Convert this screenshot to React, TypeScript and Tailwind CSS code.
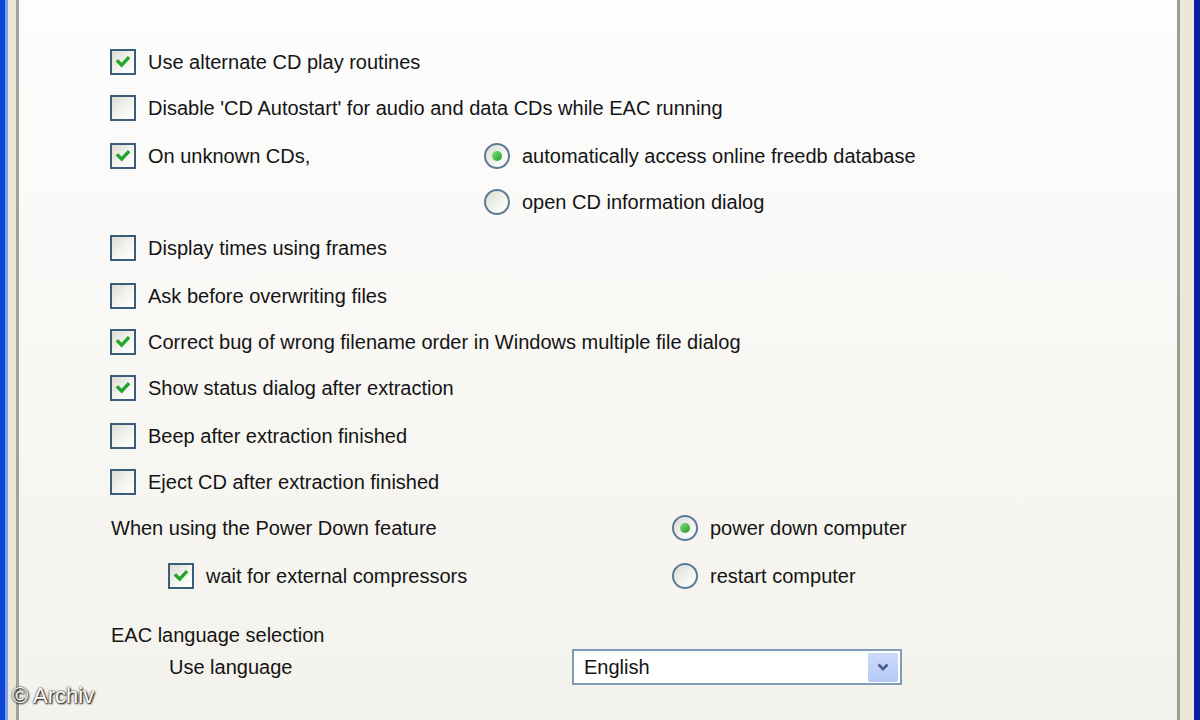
import React from 'react'

const font = { fontFamily: '"Liberation Sans", Arial, sans-serif' }

function CheckBox({ checked }: { checked?: boolean }) {
  return (
    <span className="flex h-[26px] w-[26px] flex-shrink-0 items-center justify-center border-2 border-[#3b5d7c] bg-gradient-to-br from-[#dcdcd4] via-[#f2f2ee] to-white">
      {checked && (
        <svg viewBox="0 0 20 20" className="h-[18px] w-[18px]">
          <path d="M4.5 9.5 L8.5 13.5 L15.5 6" fill="none" stroke="#22a52b" strokeWidth="3.8" strokeLinecap="square" />
        </svg>
      )}
    </span>
  )
}

function Radio({ checked }: { checked?: boolean }) {
  return (
    <span className="flex h-[26px] w-[26px] flex-shrink-0 items-center justify-center rounded-full border-2 border-[#5d7a96] bg-gradient-to-br from-[#dcdcd4] via-[#f1f1ec] to-white">
      {checked && <span className="h-[10px] w-[10px] rounded-full bg-gradient-to-br from-[#7be37b] to-[#1f9a25]" />}
    </span>
  )
}

function Check({ checked, label }: { checked?: boolean; label: string }) {
  return (
    <div className="flex items-center gap-[12px]">
      <CheckBox checked={checked} />
      <span>{label}</span>
    </div>
  )
}

function Opt({ checked, label }: { checked?: boolean; label: string }) {
  return (
    <div className="flex items-center gap-[12px]">
      <Radio checked={checked} />
      <span>{label}</span>
    </div>
  )
}

export default function App() {
  return (
    <div className="relative flex h-[720px] w-[1200px] overflow-hidden text-[20px] text-[#141414]" style={font}>
      {/* left window frame */}
      <div className="flex flex-shrink-0">
        <div className="w-[5px] bg-[#0a45d8]" />
        <div className="w-[3px] bg-[#7ea0ee]" />
        <div className="w-[8px] bg-[#ebe8d8]" />
        <div className="w-[3px] bg-[#a3a39c]" />
      </div>

      <div className="flex-1 bg-gradient-to-b from-[#fdfdfd] to-[#f4f2ec] pl-[91px] pt-[39px]">
        <div className="flex h-[46px] items-center">
          <Check checked label="Use alternate CD play routines" />
        </div>
        <div className="flex h-[46px] items-center">
          <Check label="Disable 'CD Autostart' for audio and data CDs while EAC running" />
        </div>
        <div className="mt-[2px] flex h-[46px] items-center">
          <div className="w-[374px]">
            <Check checked label="On unknown CDs," />
          </div>
          <Opt checked label="automatically access online freedb database" />
        </div>
        <div className="flex h-[46px] items-center pl-[374px]">
          <Opt label="open CD information dialog" />
        </div>
        <div className="flex h-[46px] items-center">
          <Check label="Display times using frames" />
        </div>
        <div className="mt-[2px] flex h-[46px] items-center">
          <Check label="Ask before overwriting files" />
        </div>
        <div className="flex h-[46px] items-center">
          <Check checked label="Correct bug of wrong filename order in Windows multiple file dialog" />
        </div>
        <div className="flex h-[46px] items-center">
          <Check checked label="Show status dialog after extraction" />
        </div>
        <div className="mt-[2px] flex h-[46px] items-center">
          <Check label="Beep after extraction finished" />
        </div>
        <div className="flex h-[46px] items-center">
          <Check label="Eject CD after extraction finished" />
        </div>
        <div className="flex h-[46px] items-center">
          <div className="w-[562px] pl-px">When using the Power Down feature</div>
          <Opt checked label="power down computer" />
        </div>
        <div className="mt-[2px] flex h-[46px] items-center">
          <div className="w-[562px] pl-[58px]">
            <Check checked label="wait for external compressors" />
          </div>
          <Opt label="restart computer" />
        </div>
        <div className="mt-[20px] flex h-[32px] items-center pl-px">EAC language selection</div>
        <div className="flex h-[32px] items-center">
          <div className="w-[462px] pl-[59px]">Use language</div>
          <div className="flex h-[36px] w-[330px] items-center border-2 border-[#7f9db9] bg-white pl-[10px] pr-[2px]">
            <span className="flex-1">English</span>
            <span className="flex h-[29px] w-[30px] items-center justify-center rounded-[2px] bg-gradient-to-b from-[#cddcfc] to-[#b4c8f6]">
              <svg viewBox="0 0 16 16" className="h-[16px] w-[16px]">
                <path d="M3.5 5.5 L8 10 L12.5 5.5" fill="none" stroke="#4d6185" strokeWidth="2.8" />
              </svg>
            </span>
          </div>
        </div>
      </div>

      {/* right window frame */}
      <div className="flex flex-shrink-0">
        <div className="w-[3px] bg-[#9d9d98]" />
        <div className="w-[14px] bg-[#ebe8d8]" />
        <div className="w-[6px] bg-[#0a1ea0]" />
      </div>

      <div
        className="absolute bottom-[8px] left-[12px] text-[22px] text-white"
        style={{ textShadow: '0 0 2px #000, 1px 1px 2px #000' }}
      >
        © Archiv
      </div>
    </div>
  )
}
